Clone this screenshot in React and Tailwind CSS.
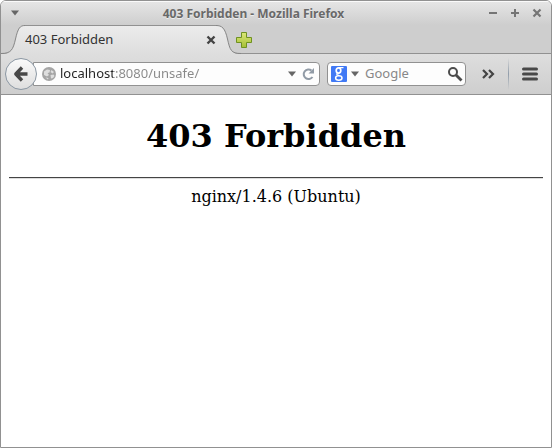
import React from "react";

function DownArrow() {
  return (
    <svg width="8" height="6" viewBox="0 0 8 6" aria-hidden="true">
      <path d="M0 .5h8L4 5.5z" fill="#666" />
    </svg>
  );
}

function TitleBar() {
  return (
    <header className="flex h-6 items-center bg-linear-to-b from-[#e6e6e6] to-[#cecece] pr-[9px] pl-2 shadow-[inset_0_1px_0_#fafafa]">
      <button aria-label="Window menu" className="flex w-5 pl-0.5">
        <DownArrow />
      </button>
      <h1 className="flex-1 pt-0.5 text-center text-xs leading-6 font-bold whitespace-nowrap text-[#696969] [text-shadow:0_1px_0_#eee]">
        403 Forbidden - Mozilla Firefox
      </h1>
      <div className="flex w-16 justify-end gap-3 text-[#757575]">
        <button aria-label="Minimize">
          <svg width="10" height="10" viewBox="0 0 10 10"><path d="M1 5h8" stroke="currentColor" strokeWidth="2" /></svg>
        </button>
        <button aria-label="Maximize">
          <svg width="10" height="10" viewBox="0 0 10 10"><path d="M1 5h8M5 1v8" stroke="currentColor" strokeWidth="2" /></svg>
        </button>
        <button aria-label="Close">
          <svg width="10" height="10" viewBox="0 0 10 10"><path d="M1.500 1.500l7 7M8.500 1.500l-7 7" stroke="currentColor" strokeWidth="2.200" /></svg>
        </button>
      </div>
    </header>
  );
}

function TabBar() {
  return (
    <div className="flex h-[29px] items-stretch bg-[#cecece] shadow-[inset_0_-1px_0_#919191]">
      <svg className="shrink-0" width="24" height="29" viewBox="0 0 24 29" aria-hidden="true">
        <defs>
          <linearGradient id="tabFill" x1="0" y1="0" x2="0" y2="29" gradientUnits="userSpaceOnUse">
            <stop offset="0" stopColor="#ececec" />
            <stop offset="1" stopColor="#dedede" />
          </linearGradient>
        </defs>
        <path d="M0 29C10 29 12 25 14.500 14 17 3 19 .5 24 .5V29z" fill="url(#tabFill)" />
        <path d="M0 28.500C10 28.500 12 25 14.500 14 17 3 19 .5 24 .5" fill="none" stroke="#858585" />
      </svg>
      <div className="flex w-[191px] items-center justify-between border-t border-[#919191] bg-linear-to-b from-[#ececec] to-[#dedede] text-[13px] text-[#333]">
        <span>403 Forbidden</span>
        <button aria-label="Close tab">
          <svg width="10" height="10" viewBox="0 0 10 10"><path d="M1.500 1.500l7 7M8.500 1.500l-7 7" stroke="#444" strokeWidth="2.400" /></svg>
        </button>
      </div>
      <svg className="shrink-0" width="25" height="29" viewBox="0 0 25 29" aria-hidden="true">
        <path d="M25 29C15 29 14 25 11.500 14 9 3 6 .5 0 .5V29z" fill="url(#tabFill)" />
        <path d="M25 28.500C15 28.500 14 25 11.500 14 9 3 6 .5 0 .5" fill="none" stroke="#858585" />
      </svg>
      <button aria-label="New tab" className="-ml-1.5">
        <svg width="18" height="18" viewBox="0 0 18 18">
          <defs>
            <linearGradient id="plusFill" x1="0" y1="0" x2="0" y2="1">
              <stop offset="0" stopColor="#dce878" />
              <stop offset="1" stopColor="#a5bf35" />
            </linearGradient>
          </defs>
          <path d="M6.500 1.500h5v5h5v5h-5v5h-5v-5h-5v-5h5z" fill="url(#plusFill)" stroke="#6f9122" strokeLinejoin="round" />
        </svg>
      </button>
    </div>
  );
}

function NavBar() {
  return (
    <nav className="flex h-[41px] items-center border-b border-[#919191] bg-linear-to-b from-[#dedede] to-[#cecece] pr-3 pl-1 text-[13px]">
      <button
        aria-label="Back"
        className="z-10 flex size-8 shrink-0 items-center justify-center rounded-full border border-[#8b97a3] bg-linear-to-b from-[#fafafa] to-[#dedede]"
      >
        <svg width="16" height="16" viewBox="0 0 16 16">
          <path d="M9 1.500L2.800 8 9 14.500M3 8h11.500" fill="none" stroke="#484848" strokeWidth="3.400" strokeLinejoin="round" />
        </svg>
      </button>
      <div className="-ml-1 flex h-6 min-w-0 flex-1 items-center rounded-r-sm border border-[#919191] bg-[#fdfdfd] pr-1 pl-2">
        <svg className="shrink-0" width="14" height="14" viewBox="0 0 14 14" aria-hidden="true">
          <circle cx="7" cy="7" r="7" fill="#a5a5a5" />
          <path d="M2 4.500L5 2.500l3 .5-.5 2.500-2 .5L7 8 5 9.500 2 8zM9.500 3l2.500 2-1.500 1.500L8.500 5zM8.500 8l3-.5 1 1.500-1.500 2L9 11.500zM3.500 10.500l3 .5-.5 1.500z" fill="#dedede" />
        </svg>
        <input
          aria-label="Address"
          defaultValue="localhost:8080/unsafe/"
          className="ml-1 min-w-0 flex-1 bg-linear-to-r from-[#222] from-[53px] to-[#888] to-[53px] bg-clip-text text-transparent outline-none"
        />
        <button aria-label="Show history" className="mr-1.5">
          <DownArrow />
        </button>
        <button aria-label="Reload">
          <svg width="13" height="14" viewBox="0 0 13 14">
            <path d="M10.500 10A4.800 4.800 0 1 1 9.500 3.500" fill="none" stroke="#919ba6" strokeWidth="2" />
            <path d="M12 1v5.500H6.500z" fill="#919ba6" />
          </svg>
        </button>
      </div>
      <div className="ml-[7px] flex h-6 w-[139px] shrink-0 items-center rounded-sm border border-[#919191] bg-[#fdfdfd] pr-0.5 pl-[3px]">
        <button aria-label="Choose search engine" className="flex shrink-0 items-center gap-1">
          <svg width="16" height="16" viewBox="0 0 16 16">
            <rect width="16" height="16" rx="1" fill="#4079f5" />
            <g fill="none" stroke="#fff">
              <ellipse cx="7.500" cy="4.500" rx="2.300" ry="2.600" strokeWidth="1.700" />
              <path d="M8 1.600h4.500M6.500 7.200C5 8.500 6 9 8 9.300" strokeWidth="1.200" />
              <ellipse cx="7.800" cy="12" rx="3.200" ry="2.200" strokeWidth="1.500" />
            </g>
          </svg>
          <DownArrow />
        </button>
        <input aria-label="Search" placeholder="Google" className="ml-1.5 min-w-0 flex-1 outline-none placeholder:text-[#888]" />
        <button aria-label="Go" className="shrink-0">
          <svg width="16" height="16" viewBox="0 0 16 16">
            <circle cx="6" cy="6" r="4" fill="none" stroke="#4c4c4c" strokeWidth="2" />
            <path d="M9 9l5.500 5.500" stroke="#4c4c4c" strokeWidth="2.800" />
          </svg>
        </button>
      </div>
      <button aria-label="More tools" className="ml-4 shrink-0">
        <svg width="13" height="10" viewBox="0 0 13 10">
          <path d="M1 1l4 4-4 4M7 1l4 4-4 4" fill="none" stroke="#444" strokeWidth="2.200" />
        </svg>
      </button>
      <div className="mr-3 ml-[13px] h-8 w-px shrink-0 bg-linear-to-b from-transparent via-[#919daa] to-transparent" />
      <button aria-label="Open menu" className="shrink-0">
        <svg width="18" height="14" viewBox="0 0 18 14">
          <path d="M2.500 2h13M2.500 7h13M2.500 12h13" stroke="#484848" strokeWidth="3" strokeLinecap="round" />
        </svg>
      </button>
    </nav>
  );
}

export default function App() {
  return (
    <div className="flex min-h-screen flex-col overflow-hidden rounded-t-md border border-[#919191] bg-white font-['Noto_Sans','Open_Sans',sans-serif]">
      <TitleBar />
      <TabBar />
      <NavBar />
      <main className="px-2 text-center font-['DejaVu_Serif',serif] text-black">
        <h2 className="my-[21px] text-[32px] leading-10 font-bold">403 Forbidden</h2>
        <hr className="mb-2 border-t border-b border-t-[#444] border-b-[#ddd]" />
        <p className="text-base leading-5">nginx/1.4.6 (Ubuntu)</p>
      </main>
    </div>
  );
}
